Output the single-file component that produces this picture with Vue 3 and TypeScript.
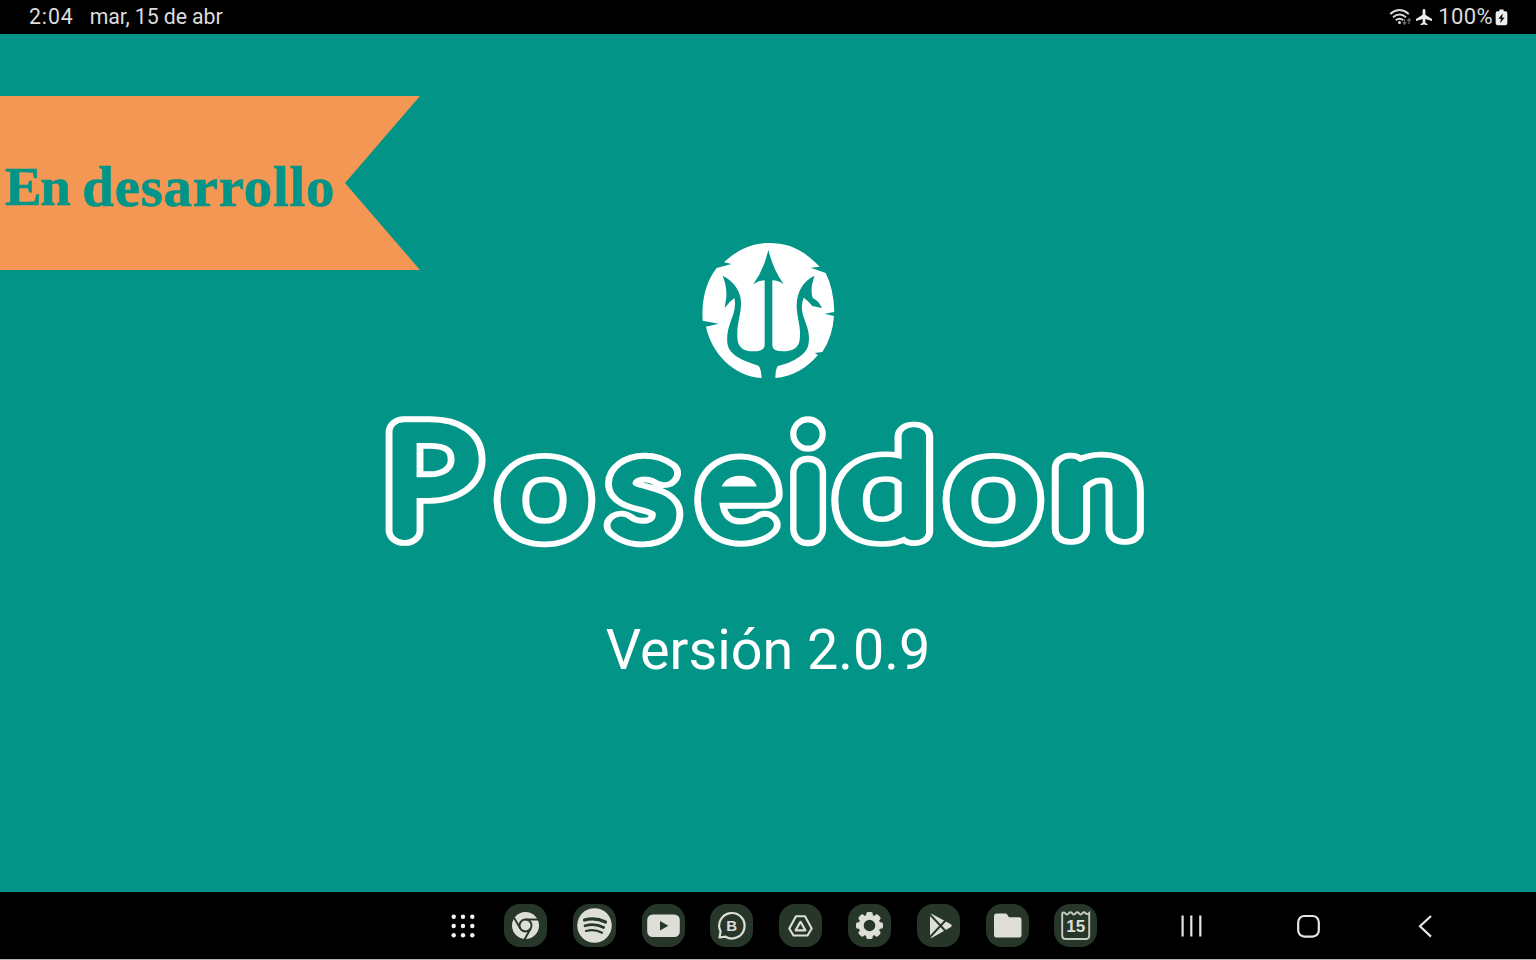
<script setup lang="ts">
interface Letter {
  char: string
  x: number
  y: number
  size: number
  stretch: number
  band: number
}

const letters: Letter[] = [
  { char: 'P', x: 55, y: 124.5, size: 141, stretch: 1.15, band: 33.5 },
  { char: 'o', x: 169.5, y: 126.8, size: 132, stretch: 1.205, band: 31 },
  { char: 's', x: 268.5, y: 126.8, size: 131, stretch: 1.16, band: 30.5 },
  { char: 'e', x: 363, y: 127, size: 133, stretch: 1.1, band: 28.5 },
  { char: 'ı', x: 433, y: 123.5, size: 114, stretch: 1, band: 34.5 },
  { char: 'd', x: 509.8, y: 125.8, size: 133, stretch: 1.26, band: 33 },
  { char: 'o', x: 618.5, y: 126.8, size: 132, stretch: 1.205, band: 31 },
  { char: 'n', x: 722.5, y: 125, size: 126.5, stretch: 1.205, band: 33.5 },
]

const place = (l: Letter): string => `translate(${l.x} ${l.y}) scale(${l.stretch} 1)`

const apps: string[] = ['chrome', 'spotify', 'youtube', 'business', 'drive', 'settings', 'play', 'files', 'calendar']
const teeth: number[] = [0, 45, 90, 135, 180, 225, 270, 315]
</script>

<template>
  <div class="screen">
    <header class="status">
      <span class="clock">2:04</span>
      <span class="date">mar, 15 de abr</span>
      <div class="status-right">
        <svg class="wifi" viewBox="0 0 24 20">
          <g fill="none" stroke="#d8d8d8" stroke-width="1.9">
            <path d="M1.2 7Q10.500 -0.800 19.800 7" />
            <path d="M4 10.200Q10.500 4.800 17 10.200" />
            <path d="M6.800 13.200Q10.500 10.200 14.200 13.200" />
          </g>
          <circle cx="10.500" cy="15.600" r="1.500" fill="#e2e2e2" />
          <path d="M15.500 12v5m-1.700-1.700l1.700 1.900 1.700-1.900M20 17v-5m-1.700 1.700L20 11.800l1.700 1.900" fill="none" stroke="#66665f" stroke-width="1.300" />
        </svg>
        <svg class="plane" viewBox="0 0 18 18">
          <path d="M9 .8Q10.400 1 10.400 3V6.700L17 11v1.900l-6.600-2v3.800l2 1.400v1.200L9 16.500l-3.400.8v-1.200l2-1.400v-3.800l-6.600 2V11l6.600-4.300V3Q7.600 1 9 .8Z" fill="#eee" />
        </svg>
        <span class="percent">100%</span>
        <svg class="battery" viewBox="0 0 12 16">
          <path d="M4 .5h4v1.700h1.800q1.700 0 1.700 1.700v9.600q0 1.700-1.700 1.700H2.200Q.5 15.200.5 13.500V3.900q0-1.700 1.700-1.700H4Z" fill="#eee" />
          <path d="M7.300 4L3 9.200h2.500L4.700 13.400 9 8.100H6.500Z" fill="#111" />
        </svg>
      </div>
    </header>

    <main class="splash">
      <div class="ribbon"><span class="word-en">En</span><span class="word-dev">desarrollo</span></div>

      <svg class="emblem" viewBox="0 0 468 480">
        <path
          d="M102 97C140 60 185 39 235 39C300 39 340 60 389 110L362 113L407 129Q431 175 433 246L404 251L432 258Q428 320 397 366L374 369L384 375Q330 438 256 444Q256 420 263 408C300 400 348 378 355 345C363 300 344 280 337 246Q333 222 341 203Q352 210 367 228L396 234Q384 210 368 204Q359 176 374 137C338 152 319 190 320 230C322 272 334 288 329 330Q324 364 280 364Q247 364 247 347V151Q265 151 281 163Q249 118 235 59Q222 118 190 163Q207 151 224 151V347Q222 364 190 364C158 364 142 350 142 320C140 282 154 250 153 218C153 184 132 154 98 137Q111 170 109 202L104 234Q119 214 133 204Q138 225 130 252C120 282 109 303 112 340C118 378 160 392 205 407Q213 413 215 444C130 438 65 370 48 290L86 281L38 272Q32 176 80 114L125 102Z"
          fill="#fff"
        />
      </svg>

      <svg class="wordmark" viewBox="0 0 780 155" role="img" aria-label="Poseidon">
        <g class="outer">
          <text v-for="(l, i) in letters" :key="i" :font-size="l.size" :stroke-width="l.band" :transform="place(l)">{{ l.char }}</text>
        </g>
        <g class="inner" aria-hidden="true">
          <text v-for="(l, i) in letters" :key="i" :font-size="l.size" :stroke-width="l.band - 12.8" :transform="place(l)">{{ l.char }}</text>
        </g>
        <circle cx="433" cy="29" r="14.700" fill="none" stroke="#fff" stroke-width="6.200" />
      </svg>

      <p class="version">Versión 2.0.9</p>
    </main>

    <footer class="taskbar">
      <svg class="drawer" viewBox="0 0 24 24">
        <g fill="#f4f4f4">
          <template v-for="r in 3" :key="r">
            <circle v-for="c in 3" :key="c" :cx="c * 9.300 - 6.600" :cy="r * 9.200 - 6.400" r="2.200" />
          </template>
        </g>
      </svg>
      <div class="apps">
        <div v-for="app in apps" :key="app" class="tile">
          <svg viewBox="0 0 43 43">
            <g v-if="app === 'chrome'">
              <circle cx="21.500" cy="21.500" r="13.500" fill="#deded9" />
              <g fill="none" stroke="#26372a" stroke-width="1.900">
                <circle cx="21.500" cy="21.500" r="6" />
                <path d="M21.500 15.500H34M16.300 24.500L10 13.700M26.700 24.500L20.500 35.500" />
              </g>
            </g>
            <g v-else-if="app === 'spotify'">
              <circle cx="21.500" cy="21.500" r="17.300" fill="#deded9" />
              <g fill="none" stroke="#26372a" stroke-linecap="round">
                <path d="M11.500 16Q22 13 32.500 18" stroke-width="3.200" />
                <path d="M12 21.800Q22 19 30.700 23.500" stroke-width="2.700" />
                <path d="M13 27Q21.500 24.800 29 28.700" stroke-width="2.200" />
              </g>
            </g>
            <g v-else-if="app === 'youtube'">
              <rect x="5.200" y="10.500" width="32.600" height="22.500" rx="5.500" fill="#deded9" />
              <path d="M18 17v9.400l8.300-4.700Z" fill="#26372a" />
            </g>
            <g v-else-if="app === 'business'">
              <path d="M9.500 33.500L10.600 27.500A12.700 12.700 0 1 1 15.500 32.700Z" fill="none" stroke="#deded9" stroke-width="2.200" stroke-linejoin="round" />
              <text x="21.600" y="27" class="letter-b">B</text>
            </g>
            <g v-else-if="app === 'drive'" fill="none" stroke="#deded9" stroke-linejoin="round">
              <path d="M17 12.200h9L32.700 24.500 28.500 31.500h-14L10.300 24.500Z" stroke-width="2.100" />
              <path d="M21.500 17.800L26.400 26.300H16.600Z" stroke-width="2.200" />
            </g>
            <g v-else-if="app === 'settings'" fill="#deded9">
              <rect v-for="a in teeth" :key="a" x="18.200" y="8" width="6.600" height="7" rx="2" :transform="`rotate(${a} 21.500 21.500)`" />
              <circle cx="21.500" cy="21.500" r="8.300" fill="none" stroke="#deded9" stroke-width="5" />
            </g>
            <g v-else-if="app === 'play'">
              <path d="M13 11Q13 9.200 15 10L33.500 20Q36 21.700 33.500 23.300L15 33.800Q13 34.500 13 32.500Z" fill="#deded9" />
              <path d="M12.500 10L28.500 27M12.500 33.500L28.500 16.500" stroke="#26372a" stroke-width="1.900" />
            </g>
            <g v-else-if="app === 'files'">
              <path d="M10.200 9.500H19.500Q20.500 9.500 21.200 10.500L23 13.200H33Q35.500 13.200 35.500 15.500V31Q35.500 33.500 33 33.500H10.500Q8 33.500 8 31V12Q8 9.500 10.200 9.500Z" fill="#deded9" />
            </g>
            <g v-else>
              <path d="M8.200 9.300Q9.500 8 11 9Q12.800 12 15 9Q16.500 7.500 18 9Q19.800 12 21.800 9Q23.300 7.500 24.800 9Q26.600 12 28.600 9Q30 7.500 31.500 9Q33 11.300 35.200 9V31.500Q35.200 35 31.700 35H11.500Q8.200 35 8.200 31.500Z" fill="none" stroke="#c8cac5" stroke-width="1.900" />
              <text x="21.800" y="28" class="day">15</text>
            </g>
          </svg>
        </div>
      </div>
      <svg class="nav" viewBox="0 0 280 30">
        <g fill="none" stroke="#e6e6e6" stroke-width="2.200">
          <path d="M12.600 4.500v21M21.300 4.500v21M30.300 4.500v21" />
          <rect x="128.200" y="5" width="20.600" height="20.600" rx="6.200" />
          <path d="M261 5L250 15.300L261 25.600" />
        </g>
      </svg>
    </footer>
    <div class="edge"></div>
  </div>
</template>

<style>
html,
body {
  margin: 0;
  background: #000;
}
</style>

<style scoped>
.screen {
  width: 1536px;
  height: 960px;
  display: flex;
  flex-direction: column;
  overflow: hidden;
  background: #000;
}
.status {
  height: 34px;
  box-sizing: border-box;
  padding: 0 28px 0 29px;
  display: flex;
  align-items: center;
  font: 400 21.3px/34px Roboto, sans-serif;
  color: #dcdcdc;
}
.clock {
  letter-spacing: 0.9px;
}
.date {
  margin-left: 16px;
  letter-spacing: -0.1px;
}
.status-right {
  margin-left: auto;
  display: flex;
  align-items: center;
}
.wifi {
  width: 24px;
  height: 20px;
}
.plane {
  width: 18px;
  height: 18px;
  margin-left: 2px;
}
.percent {
  margin-left: 5px;
  font-size: 22px;
  letter-spacing: 0.4px;
}
.battery {
  width: 13px;
  height: 17px;
  margin-left: 2px;
}
.splash {
  position: relative;
  height: 858px;
  box-sizing: border-box;
  padding-top: 196px;
  display: flex;
  flex-direction: column;
  align-items: center;
  background: #029587;
}
.ribbon {
  position: absolute;
  left: 0;
  top: 62px;
  width: 420px;
  height: 174px;
  display: flex;
  align-items: center;
  box-sizing: border-box;
  padding: 7px 0 0 5px;
  background: #f49755;
  clip-path: polygon(0 0, 100% 0, 345px 50%, 100% 100%, 0 100%);
  color: #029587;
  font: 700 57px/1 'Liberation Serif', serif;
  -webkit-text-stroke: 0.6px #029587;
  white-space: nowrap;
}
.word-en {
  font-size: 55px;
  line-height: 57px;
  letter-spacing: -1.5px;
}
.word-dev {
  margin-left: 13px;
  letter-spacing: 0.7px;
}
.emblem {
  width: 156px;
  height: 160px;
}
.wordmark {
  width: 780px;
  height: 155px;
  margin: 15px 6px 0 0;
  overflow: visible;
  font-family: Lato, sans-serif;
  font-weight: 100;
  text-anchor: middle;
}
.wordmark text {
  vector-effect: non-scaling-stroke;
}
.outer {
  fill: #fff;
  stroke: #fff;
  stroke-linejoin: round;
}
.inner {
  fill: #029587;
  stroke: #029587;
  stroke-linejoin: round;
}
.version {
  margin: 57px 0 0;
  font: 400 55.700px/66px Roboto, sans-serif;
  color: #fff;
}
.taskbar {
  height: 67px;
  box-sizing: border-box;
  padding: 0 0 0 451px;
  display: flex;
  align-items: center;
  background: #000;
}
.drawer {
  width: 24px;
  height: 24px;
}
.apps {
  display: flex;
  gap: 25.800px;
  margin-left: 29px;
}
.tile {
  width: 43px;
  height: 43px;
  border-radius: 16px;
  background: #26372a;
}
.tile svg {
  display: block;
  width: 43px;
  height: 43px;
}
.letter-b {
  font: 700 15px 'Liberation Sans', sans-serif;
  text-anchor: middle;
  fill: #deded9;
}
.day {
  font: 700 17px 'Liberation Sans', sans-serif;
  text-anchor: middle;
  fill: #deded9;
}
.nav {
  width: 280px;
  height: 30px;
  margin-left: 73px;
}
.edge {
  height: 1px;
  background: #b4b4aa;
}
</style>
